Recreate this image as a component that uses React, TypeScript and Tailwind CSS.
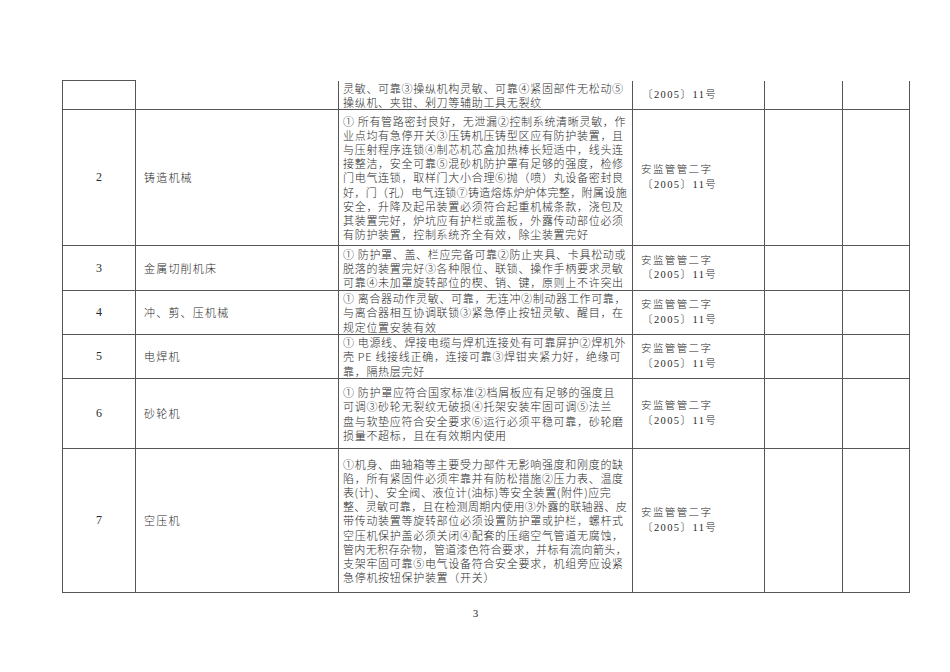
const font = { fontFamily: '"Liberation Serif", "Noto Sans CJK SC", serif' };
const cjk = { fontFamily: '"Noto Sans CJK SC", "Liberation Serif", sans-serif' };

type Row = {
  no: string;
  name: string;
  lines: string[];
  basis: string[];
  h: string;
  topOpen?: boolean;
};

const rows: Row[] = [
  {
    no: "",
    name: "",
    lines: ["灵敏、可靠③操纵机构灵敏、可靠④紧固部件无松动⑤", "操纵机、夹钳、剁刀等辅助工具无裂纹"],
    basis: ["〔2005〕11号"],
    h: "h-[29px]",
    topOpen: true,
  },
  {
    no: "2",
    name: "铸造机械",
    lines: [
      "① 所有管路密封良好，无泄漏②控制系统清晰灵敏，作",
      "业点均有急停开关③压铸机压铸型区应有防护装置，且",
      "与压射程序连锁④制芯机芯盒加热棒长短适中，线头连",
      "接整洁，安全可靠⑤混砂机防护罩有足够的强度，检修",
      "门电气连锁，取样门大小合理⑥抛（喷）丸设备密封良",
      "好，门（孔）电气连锁⑦铸造熔炼炉炉体完整，附属设施",
      "安全，升降及起吊装置必须符合起重机械条款，浇包及",
      "其装置完好，炉坑应有护栏或盖板，外露传动部位必须",
      "有防护装置，控制系统齐全有效，除尘装置完好",
    ],
    basis: ["安监管管二字", "〔2005〕11号"],
    h: "h-[136px]",
  },
  {
    no: "3",
    name: "金属切削机床",
    lines: [
      "① 防护罩、盖、栏应完备可靠②防止夹具、卡具松动或",
      "脱落的装置完好③各种限位、联锁、操作手柄要求灵敏",
      "可靠④未加罩旋转部位的楔、销、键，原则上不许突出",
    ],
    basis: ["安监管管二字", "〔2005〕11号"],
    h: "h-[45px]",
  },
  {
    no: "4",
    name: "冲、剪、压机械",
    lines: [
      "① 离合器动作灵敏、可靠，无连冲②制动器工作可靠，",
      "与离合器相互协调联锁③紧急停止按钮灵敏、醒目，在",
      "规定位置安装有效",
    ],
    basis: ["安监管管二字", "〔2005〕11号"],
    h: "h-[44px]",
  },
  {
    no: "5",
    name: "电焊机",
    lines: [
      "① 电源线、焊接电缆与焊机连接处有可靠屏护②焊机外",
      "壳 PE 线接线正确，连接可靠③焊钳夹紧力好，绝缘可",
      "靠，隔热层完好",
    ],
    basis: ["安监管管二字", "〔2005〕11号"],
    h: "h-[44px]",
  },
  {
    no: "6",
    name: "砂轮机",
    lines: [
      "① 防护罩应符合国家标准②档屑板应有足够的强度且",
      "可调③砂轮无裂纹无破损④托架安装牢固可调⑤法兰",
      "盘与软垫应符合安全要求⑥运行必须平稳可靠，砂轮磨",
      "损量不超标，且在有效期内使用",
    ],
    basis: ["安监管管二字", "〔2005〕11号"],
    h: "h-[70px]",
  },
  {
    no: "7",
    name: "空压机",
    lines: [
      "①机身、曲轴箱等主要受力部件无影响强度和刚度的缺",
      "陷，所有紧固件必须牢靠并有防松措施②压力表、温度",
      "表(计)、安全阀、液位计(油标)等安全装置(附件)应完",
      "整、灵敏可靠，且在检测周期内使用③外露的联轴器、皮",
      "带传动装置等旋转部位必须设置防护罩或护栏，螺杆式",
      "空压机保护盖必须关闭④配套的压缩空气管道无腐蚀，",
      "管内无积存杂物，管道漆色符合要求，并标有流向箭头，",
      "支架牢固可靠⑤电气设备符合安全要求，机组旁应设紧",
      "急停机按钮保护装置（开关）",
    ],
    basis: ["安监管管二字", "〔2005〕11号"],
    h: "h-[144px]",
  },
];

// squeeze long lines so they stay inside the 294px column
const fit = (s: string) => {
  let units = 0;
  for (const ch of s) units += ch === " " ? 0.3 : ch.charCodeAt(0) < 128 ? 0.55 : 1;
  const n = [...s].length;
  return Math.min(0.7, (284 - units * 11) / n);
};

const cell = "border border-[#555] align-middle p-0";

export default function App() {
  return (
    <div className="w-[950px] h-[672px] bg-white text-[#2a2a2a] overflow-hidden" style={font}>
      <div className="pt-[80px] pl-[62px]">
        <table className="table-fixed border-collapse w-[847px] text-[11px] leading-[14.2px]">
          <colgroup>
            <col className="w-[73px]" />
            <col className="w-[203px]" />
            <col className="w-[294px]" />
            <col className="w-[132px]" />
            <col className="w-[78px]" />
            <col className="w-[67px]" />
          </colgroup>
          <tbody>
            {rows.map((r, i) => (
              <tr key={i} className={r.h}>
                <td className={`${cell} text-center text-[12px]`}>{r.no}</td>
                <td className={`${cell} ${r.topOpen ? "border-t-0" : ""} pl-[8px] tracking-[1.2px] font-light`} style={cjk}>
                  {r.name}
                </td>
                <td className={`${cell} ${r.topOpen ? "border-t-0" : ""} pl-[4px] font-light`} style={cjk}>
                  {r.lines.map((l, j) => (
                    <div key={j} className="whitespace-nowrap" style={{ letterSpacing: `${fit(l)}px` }}>
                      {l}
                    </div>
                  ))}
                </td>
                <td className={`${cell} ${r.topOpen ? "border-t-0" : ""} pl-[8px] font-light`}>
                  {r.basis.map((b, j) => (
                    <div key={j} className={`whitespace-nowrap tracking-[1.4px] text-[10.5px] ${b.startsWith("〔") ? "pl-[1px]" : ""}`}>
                      {b}
                    </div>
                  ))}
                </td>
                <td className={`${cell} ${r.topOpen ? "border-t-0" : ""}`}></td>
                <td className={`${cell} ${r.topOpen ? "border-t-0" : ""}`}></td>
              </tr>
            ))}
          </tbody>
        </table>
        <div className="w-[827px] text-center text-[11px] mt-[12px]">3</div>
      </div>
    </div>
  );
}
